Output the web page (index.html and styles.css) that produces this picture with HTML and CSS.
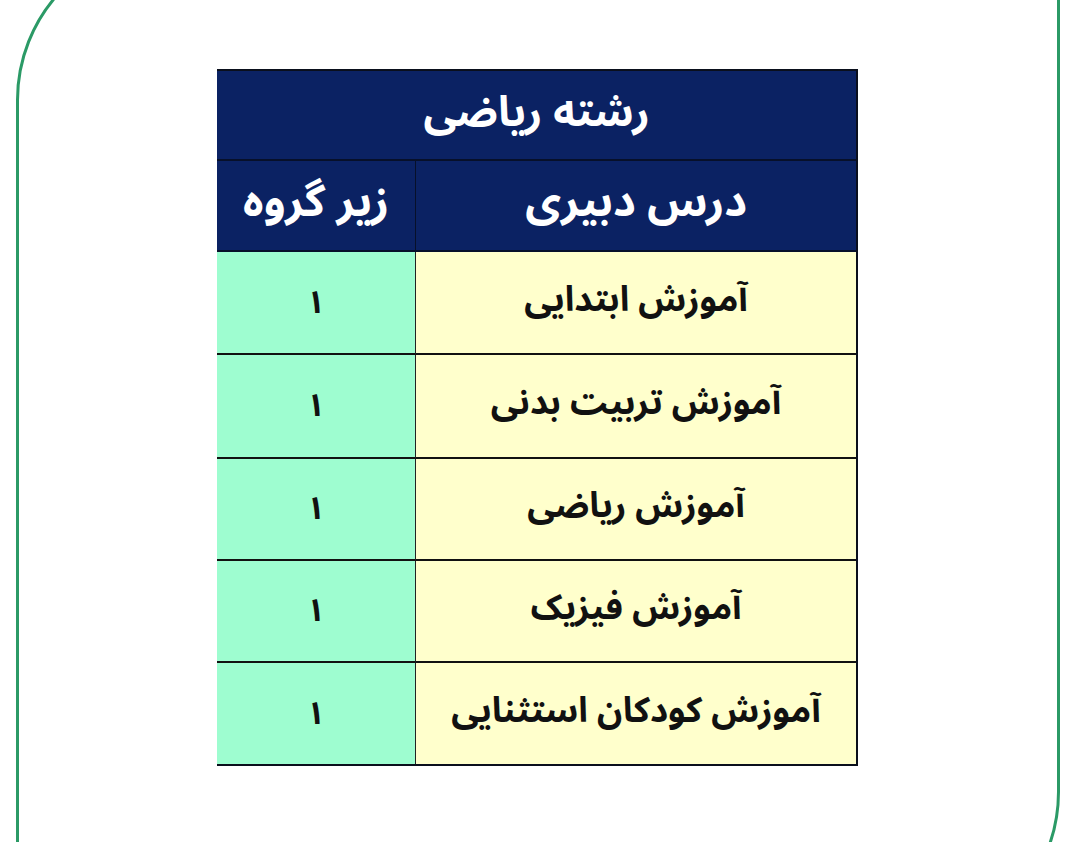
FILE: index.html
```html
<!DOCTYPE html>
<html lang="fa">
<head>
<meta charset="utf-8">
<title>رشته ریاضی</title>
<link rel="stylesheet" href="styles.css">
</head>
<body>
<div class="frame">
  <div class="table" dir="rtl">
    <div class="cell title">رشته ریاضی</div>
    <div class="cell head head-main">درس دبیری</div>
    <div class="cell head head-side">زیر گروه</div>
    <div class="cell course">آموزش ابتدایی</div>
    <div class="cell group">۱</div>
    <div class="cell course">آموزش تربیت بدنی</div>
    <div class="cell group">۱</div>
    <div class="cell course">آموزش ریاضی</div>
    <div class="cell group">۱</div>
    <div class="cell course">آموزش فیزیک</div>
    <div class="cell group">۱</div>
    <div class="cell course last">آموزش کودکان استثنایی</div>
    <div class="cell group last">۱</div>
  </div>
</div>
</body>
</html>
```

FILE: styles.css
```css
html, body {
  margin: 0;
  padding: 0;
  background: #ffffff;
  overflow: hidden;
  height: 842px;
}

.frame {
  box-sizing: border-box;
  margin: -60px 0 0 16px;
  width: 1044px;
  height: 1012px;
  border: 3px solid #2b9a66;
  border-radius: 160px 0 160px 0;
  padding: 126px 0 0 198px;
}

.table {
  box-sizing: border-box;
  width: 641px;
  display: grid;
  grid-template-columns: 441px 198px;
  grid-template-rows: 90px 91px 103px 104px 102px 102px 101px;
  border: 2px solid #0a0f1c;
  font-family: "Noto Sans Arabic", "DejaVu Sans", sans-serif;
}

.cell {
  display: flex;
  align-items: center;
  justify-content: center;
  box-sizing: border-box;
}

.title {
  grid-column: 1 / span 2;
  background: #0b2263;
  color: #ffffff;
  font-weight: bold;
  font-size: 42px;
  border-bottom: 2px solid #07102a;
  padding-bottom: 6px;
}

.head {
  background: #0b2263;
  color: #ffffff;
  font-weight: bold;
  font-size: 44px;
  border-bottom: 2px solid #07102a;
  padding-bottom: 8px;
}

.head-main {
  border-left: 1px solid #07102a;
}

.course {
  background: #ffffcc;
  color: #111111;
  font-size: 35px;
  font-weight: bold;
  border-left: 1px solid #222222;
  border-bottom: 2px solid #111111;
  padding-bottom: 6px;
}

.group {
  background: #9efdd0;
  color: #111111;
  font-size: 32px;
  font-weight: bold;
  border-bottom: 2px solid #111111;
}

.last {
  border-bottom: none;
}
```
